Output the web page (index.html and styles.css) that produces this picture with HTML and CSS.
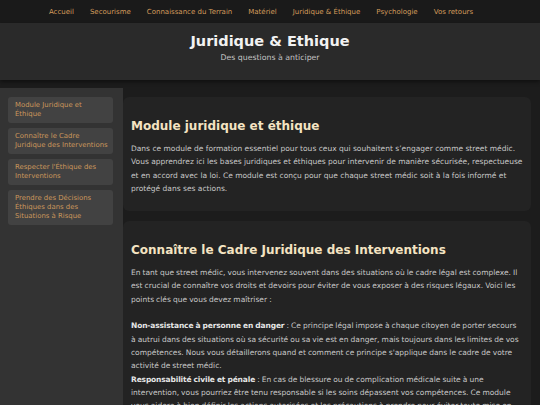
FILE: index.html
```html
<!DOCTYPE html>
<html lang="fr">
<head>
<meta charset="utf-8">
<title>Juridique &amp; Ethique</title>
<link rel="stylesheet" href="styles.css">
</head>
<body>
<nav class="topnav">
  <ul class="topnav-list">
    <li><a href="#">Accueil</a></li>
    <li><a href="#">Secourisme</a></li>
    <li><a href="#">Connaissance du Terrain</a></li>
    <li><a href="#">Matériel</a></li>
    <li><a href="#">Juridique &amp; Éthique</a></li>
    <li><a href="#">Psychologie</a></li>
    <li><a href="#">Vos retours</a></li>
  </ul>
</nav>
<header class="hero">
  <h1 class="hero-title">Juridique &amp; Ethique</h1>
  <p class="hero-sub">Des questions à anticiper</p>
</header>
<div class="layout">
  <aside class="sidebar">
    <a class="side-link" href="#">Module Juridique et Éthique</a>
    <a class="side-link" href="#">Connaître le Cadre Juridique des Interventions</a>
    <a class="side-link" href="#">Respecter l'Éthique des Interventions</a>
    <a class="side-link" href="#">Prendre des Décisions Éthiques dans des Situations à Risque</a>
  </aside>
  <main class="content">
    <section class="card">
      <h2 class="card-title">Module juridique et éthique</h2>
      <p class="card-text">Dans ce module de formation essentiel pour tous ceux qui souhaitent s’engager comme street médic. Vous apprendrez ici les bases juridiques et éthiques pour intervenir de manière sécurisée, respectueuse et en accord avec la loi. Ce module est conçu pour que chaque street médic soit à la fois informé et protégé dans ses actions.</p>
    </section>
    <section class="card">
      <h2 class="card-title">Connaître le Cadre Juridique des Interventions</h2>
      <p class="card-text card-text--tight">En tant que street médic, vous intervenez souvent dans des situations où le cadre légal est complexe. Il est crucial de connaître vos droits et devoirs pour éviter de vous exposer à des risques légaux. Voici les points clés que vous devez maîtriser :<br><br><strong>Non-assistance à personne en danger</strong> : Ce principe légal impose à chaque citoyen de porter secours à autrui dans des situations où sa sécurité ou sa vie est en danger, mais toujours dans les limites de vos compétences. Nous vous détaillerons quand et comment ce principe s'applique dans le cadre de votre activité de street médic.<br><strong>Responsabilité civile et pénale</strong> : En cas de blessure ou de complication médicale suite à une intervention, vous pourriez être tenu responsable si les soins dépassent vos compétences. Ce module vous aidera à bien définir les actions autorisées et les précautions à prendre pour éviter toute mise en cause de votre responsabilité.</p>
    </section>
  </main>
</div>
</body>
</html>
```

FILE: styles.css
```css
html, body {
  margin: 0;
  padding: 0;
}
body {
  background: #1c1c1c;
  font-family: "DejaVu Sans", Verdana, sans-serif;
  color: #c8c8c8;
  font-size: 7.5px;
}
.topnav {
  background: #1a1a1a;
  height: 23px;
  display: flex;
  align-items: center;
  justify-content: center;
  padding-right: 18px;
}
.topnav-list {
  list-style: none;
  margin: 0;
  padding: 0;
  display: flex;
  gap: 16px;
}
.topnav-list a {
  color: #d49c5c;
  text-decoration: none;
  font-size: 7px;
}
.hero {
  background: #2a2a2a;
  height: 57px;
  box-sizing: border-box;
  padding-top: 9px;
  text-align: center;
  box-shadow: 0 2px 4px rgba(0, 0, 0, 0.45);
  position: relative;
}
.hero-title {
  margin: 0;
  font-size: 14.5px;
  line-height: 18px;
  color: #f2f2f2;
  font-weight: bold;
}
.hero-sub {
  margin: 2px 0 0;
  font-size: 7.8px;
  line-height: 11px;
  color: #c4c4c4;
}
.layout {
  display: flex;
  margin-top: 8px;
  align-items: stretch;
}
.sidebar {
  width: 123px;
  flex: none;
  background: #333333;
  box-sizing: border-box;
  padding: 9px 10px 9px 8px;
  display: flex;
  flex-direction: column;
  gap: 5px;
}
.side-link {
  display: block;
  background: #424242;
  border-radius: 3px;
  padding: 4px 3px 4px 7px;
  color: #cb975c;
  text-decoration: none;
  font-size: 6.9px;
  line-height: 9px;
}
.content {
  flex: 1;
  padding: 9px 9px 0 0;
  display: flex;
  flex-direction: column;
  gap: 10px;
}
.card {
  background: #232323;
  border-radius: 6px;
  padding: 20px 8px 16px;
}
.card-title {
  margin: 0 0 7px;
  font-size: 12px;
  line-height: 18px;
  color: #f4e3c2;
  font-weight: bold;
}
.card-text {
  margin: 0;
  font-size: 7.5px;
  line-height: 13.3px;
  color: #c8c8c8;
}
.card-text--tight {
  word-spacing: -0.3px;
}
.card-text strong {
  color: #e6e6e6;
  letter-spacing: -0.15px;
}
```
